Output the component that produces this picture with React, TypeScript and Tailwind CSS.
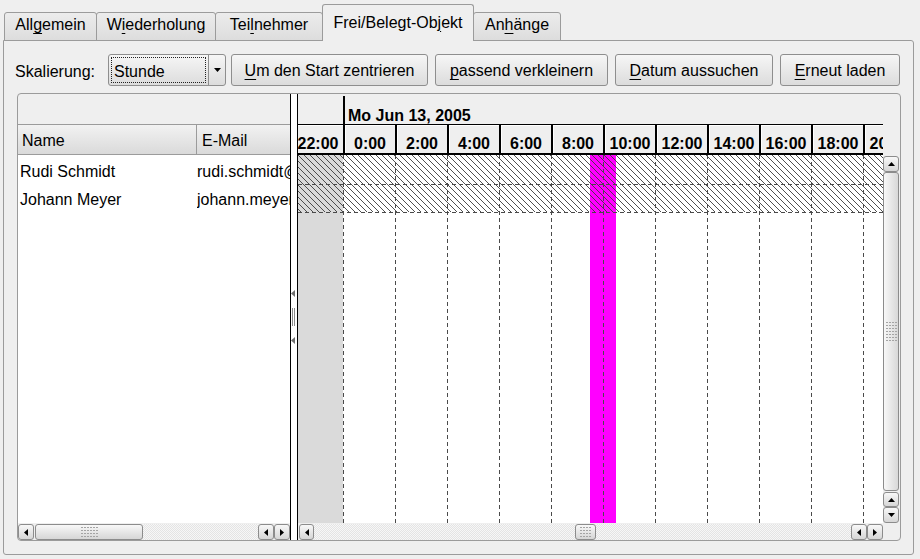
import React from "react";

type Dir = "up" | "down" | "left" | "right";

const hours = ["22:00", "0:00", "2:00", "4:00", "6:00", "8:00", "10:00", "12:00", "14:00", "16:00", "18:00", "20:00"];

const people = [
  { name: "Rudi Schmidt", mail: "rudi.schmidt@example.com" },
  { name: "Johann Meyer", mail: "johann.meyer@example.com" },
];

function U({ children }: { children: React.ReactNode }) {
  return <span className="underline decoration-1 underline-offset-[3px]">{children}</span>;
}

function Tri({ dir, color = "#000" }: { dir: Dir; color?: string }) {
  const pts = {
    up: "0,4 7,4 3.5,0",
    down: "0,0 7,0 3.5,4",
    left: "4,0 4,7 0,3.5",
    right: "0,0 0,7 4,3.5",
  }[dir];
  const flat = dir === "up" || dir === "down";
  return (
    <svg width={flat ? 7 : 4} height={flat ? 4 : 7} className="block">
      <polygon points={pts} fill={color} />
    </svg>
  );
}

function Dots({ cols, rows }: { cols: number; rows: number }) {
  const cells = [];
  for (let r = 0; r < rows; r++)
    for (let c = 0; c < cols; c++)
      cells.push(<rect key={`${r}-${c}`} x={c * 3} y={r * 3} width="2" height="1" fill="#a4a4a4" />);
  return (
    <svg width={cols * 3 - 1} height={rows * 3 - 2} className="block">
      {cells}
    </svg>
  );
}

function SBtn({ dir, className = "" }: { dir: Dir; className?: string }) {
  return (
    <div
      className={`flex shrink-0 items-center justify-center rounded-[3px] border border-[#8c8c8c] bg-gradient-to-b from-[#f8f8f8] to-[#d6d6d6] ${className}`}
    >
      <Tri dir={dir} />
    </div>
  );
}

function Track({ className = "" }: { className?: string }) {
  return (
    <div
      className={`h-full bg-[#f2f2f2] bg-[image:repeating-conic-gradient(#e4e4e4_0_25%,#f7f7f7_0_50%)] bg-[length:2px_2px] ${className}`}
    />
  );
}

function TabBar() {
  const inactive =
    "flex h-[29px] items-center justify-center rounded-t-[3px] border border-[#9b9b9b] bg-gradient-to-b from-[#ececec] to-[#dddddd] pb-[3px]";
  return (
    <div className="relative z-10 flex h-[37px] items-end pl-px">
      <div className={`${inactive} w-[93px]`}>
        All<U>g</U>emein
      </div>
      <div className={`${inactive} -ml-px w-[120px]`}>
        W<U>i</U>ederholung
      </div>
      <div className={`${inactive} -ml-px w-[108px]`}>
        Tei<U>l</U>nehmer
      </div>
      <div className="-ml-px flex h-[37px] w-[152px] items-center justify-center rounded-t-[3px] border border-b-0 border-[#9b9b9b] bg-[#efefef] pb-px">
        Frei/Belegt-Ob<U>j</U>ekt
      </div>
      <div className={`${inactive} -ml-px w-[88px]`}>
        An<U>h</U>änge
      </div>
    </div>
  );
}

function Button({ width, children }: { width: string; children: React.ReactNode }) {
  return (
    <div
      className={`flex h-[32px] shrink-0 items-center justify-center rounded-[3px] border border-[#8e8e8e] bg-gradient-to-b from-[#f6f6f6] to-[#dcdcdc] pt-[2px] ${width}`}
    >
      {children}
    </div>
  );
}

function Toolbar() {
  return (
    <div className="flex h-[32px] items-center">
      <span className="w-[93px] shrink-0 pt-[3px]">Skalierung:</span>
      <div className="flex h-[32px] w-[118px] shrink-0 rounded-[3px] border border-[#8e8e8e] bg-gradient-to-b from-[#f6f6f6] to-[#dcdcdc]">
        <div className="flex flex-1 p-[2px]">
          <div className="flex flex-1 items-center border border-dotted border-[#222] pl-[2px] pt-[3px]">Stunde</div>
        </div>
        <div className="flex w-[17px] items-center justify-center border-l border-[#8e8e8e]">
          <Tri dir="down" />
        </div>
      </div>
      <div className="ml-[5px] flex gap-[7px]">
        <Button width="w-[197px]">
          <U>U</U>m den Start zentrieren
        </Button>
        <Button width="w-[173px]">
          <U>p</U>assend verkleinern
        </Button>
        <Button width="w-[158px]">
          <U>D</U>atum aussuchen
        </Button>
        <Button width="w-[120px]">
          <U>E</U>rneut laden
        </Button>
      </div>
    </div>
  );
}

function LeftPanel() {
  return (
    <div className="flex w-[272px] shrink-0 flex-col">
      <div className="h-[30px]" />
      <div className="flex h-[31px] border-y border-[#9b9b9b] bg-gradient-to-b from-[#f2f2f2] to-[#dadada]">
        <div className="flex w-[179px] items-center border-r border-[#9b9b9b] pl-[4px] pt-[3px]">Name</div>
        <div className="flex flex-1 items-center overflow-hidden whitespace-nowrap pl-[5px] pt-[3px]">E-Mail</div>
      </div>
      <div className="flex-1 bg-white pt-[3px]">
        {people.map((p) => (
          <div key={p.name} className="flex h-[28px] items-center whitespace-nowrap">
            <div className="w-[179px] pl-[2px]">{p.name}</div>
            <div className="flex-1 overflow-hidden">{p.mail}</div>
          </div>
        ))}
      </div>
      <div className="flex h-[17px] items-stretch pt-px">
        <SBtn dir="left" className="w-[16px]" />
        <div className="ml-px flex w-[108px] shrink-0 items-center justify-center rounded-[3px] border border-[#8c8c8c] bg-gradient-to-b from-[#f8f8f8] to-[#d6d6d6]">
          <Dots cols={6} rows={4} />
        </div>
        <Track className="flex-1" />
        <SBtn dir="left" className="w-[16px]" />
        <SBtn dir="right" className="w-[16px]" />
      </div>
    </div>
  );
}

function Splitter() {
  return (
    <div className="flex w-[8px] shrink-0 flex-col border-x border-black bg-white pt-[196px]">
      <Tri dir="left" color="#6e6e6e" />
      <div className="mt-[11px] ml-px flex gap-px">
        <div className="h-[18px] w-px bg-[#8a8a8a]" />
        <div className="h-[18px] w-px bg-[#8a8a8a]" />
      </div>
      <div className="mt-[11px]">
        <Tri dir="left" color="#6e6e6e" />
      </div>
    </div>
  );
}

function Chart() {
  const W = 585;
  const H = 368;
  const xs = Array.from({ length: 11 }, (_, i) => 45 + 52 * i);
  return (
    <svg width={W} height={H} className="block bg-white">
      <defs>
        <pattern id="hatch" width="6" height="6" patternUnits="userSpaceOnUse">
          <path d="M0,0 L6,6 M-1,5 L1,7 M5,-1 L7,1" stroke="#3c3c3c" strokeWidth="0.9" />
        </pattern>
      </defs>
      <rect x="0" y="0" width="45" height={H} fill="#dadada" />
      <rect x="292" y="0" width="26" height={H} fill="#ff00ff" />
      <rect x="0" y="0" width={W} height="57" fill="url(#hatch)" />
      {xs.map((x) => (
        <line key={x} x1={x + 0.5} y1="0" x2={x + 0.5} y2={H} stroke="#4a4a4a" strokeDasharray="4 3" />
      ))}
      <line x1="0" y1="29.5" x2={W} y2="29.5" stroke="#4a4a4a" strokeDasharray="4 3" />
      <line x1="0" y1="57.5" x2={W} y2="57.5" stroke="#4a4a4a" strokeDasharray="4 3" />
    </svg>
  );
}

function Gantt() {
  return (
    <div className="flex w-[585px] shrink-0 flex-col overflow-hidden">
      <div className="-ml-[7px] flex h-[30px]">
        <div className="w-[52px] shrink-0" />
        <div className="mt-[2px] flex flex-1 items-end border-l-2 border-black pl-[3px] font-bold">
          Mo Jun 13, 2005
        </div>
      </div>
      <div className="-ml-[7px] flex h-[31px] border-t border-b-2 border-black">
        {hours.map((h) => (
          <div
            key={h}
            className="flex w-[52px] shrink-0 items-end justify-center border-l-2 border-black pb-px font-bold shadow-[inset_1px_1px_0_#ffffff]"
          >
            {h}
          </div>
        ))}
      </div>
      <Chart />
      <div className="flex h-[17px] items-stretch pt-px">
        <SBtn dir="left" className="ml-px w-[15px]" />
        <Track className="w-[261px] shrink-0" />
        <div className="flex w-[21px] shrink-0 items-center justify-center rounded-[3px] border border-[#8c8c8c] bg-gradient-to-b from-[#f8f8f8] to-[#d6d6d6]">
          <Dots cols={4} rows={4} />
        </div>
        <Track className="flex-1" />
        <SBtn dir="left" className="w-[16px]" />
        <SBtn dir="right" className="w-[16px]" />
      </div>
    </div>
  );
}

function VScroll() {
  return (
    <div className="flex w-[17px] shrink-0 flex-col pr-px">
      <div className="h-[61px]" />
      <div className="flex h-[368px] flex-col pt-px">
        <SBtn dir="up" className="h-[16px]" />
        <div className="flex flex-1 items-center justify-center rounded-[3px] border border-[#8c8c8c] bg-gradient-to-r from-[#f8f8f8] to-[#d8d8d8]">
          <Dots cols={4} rows={7} />
        </div>
        <SBtn dir="up" className="mt-px h-[15px]" />
        <SBtn dir="down" className="h-[16px]" />
      </div>
    </div>
  );
}

export default function App() {
  return (
    <div className="h-[559px] w-[920px] overflow-hidden bg-[#efefef] pl-[3px] pt-[4px] font-['Liberation_Sans',Arial,sans-serif] text-[16px] leading-none text-black">
      <TabBar />
      <div className="-mt-px flex h-[515px] w-[911px] flex-col rounded-b-[3px] rounded-tr-[3px] border border-[#9b9b9b] px-[11px] pt-[13px]">
        <Toolbar />
        <div className="mt-[7px] ml-[2px] flex h-[448px] w-[884px] overflow-hidden rounded-[4px] border border-[#9b9b9b]">
          <LeftPanel />
          <Splitter />
          <Gantt />
          <VScroll />
        </div>
      </div>
    </div>
  );
}
